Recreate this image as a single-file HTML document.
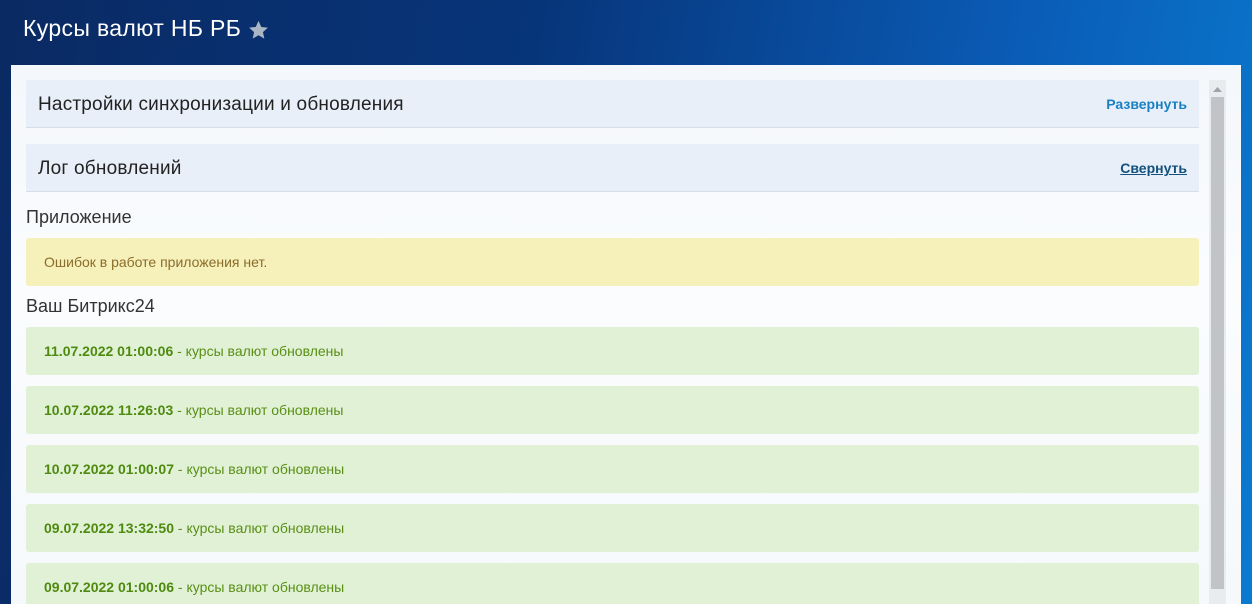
<!DOCTYPE html>
<html style="overflow:hidden"><head><meta charset="utf-8"><style>
html,body{height:604px}
body{margin:0;width:1252px;overflow:hidden;font-family:"Liberation Sans",sans-serif;
background:linear-gradient(100deg,#0a2a63 0%,#07357a 40%,#0a5bb5 75%,#0a7ad0 100%);position:relative}
.title{position:absolute;left:23px;top:15px;color:#fff;font-size:23px;letter-spacing:0.35px}
.star{position:absolute;left:248px;top:20px}
.panel{position:absolute;left:11px;top:65px;width:1230px;height:539px;overflow:hidden;background:linear-gradient(180deg,#f4f7fb,#fafcfe 40%,#f6f9fb)}
.hdr{position:absolute;left:15px;width:1173px;height:48px;background:#e8eff8;border-bottom:1px solid #d5dfeb;box-sizing:border-box}
.hdr span{position:absolute;left:12px;top:14px;font-size:19px;color:#222;letter-spacing:0.2px}
.hdr a{position:absolute;right:12px;top:16px;font-size:14px;font-weight:bold;color:#1a80c2}
.h{position:absolute;left:15px;font-size:18px;color:#333}
.box{position:absolute;left:15px;width:1173px;height:48px;border-radius:3px;font-size:14px}
.box span{position:absolute;left:18px;top:16px}
.y{background:#f6f0bb;color:#8a6d2a}
.g{background:#e0f1d6;color:#5a8f16}
.g b{color:#4e8a0e}
.sb{position:absolute;left:1198px;top:15px;width:17px;height:524px;background:#e9ecef}
.th{position:absolute;left:2px;top:17px;width:13px;height:492px;background:#c1c3c6}
</style></head><body>
<div class="title">Курсы валют НБ РБ</div>
<svg class="star" width="21" height="20" viewBox="0 0 24 23"><path d="M12 1l3.2 7 7.6.8-5.7 5.1 1.6 7.5L12 17.6 5.3 21.4l1.6-7.5L1.2 8.8 8.8 8z" fill="#a9b6c6"/></svg>
<div class="panel">
<div class="hdr" style="top:15px"><span>Настройки синхронизации и обновления</span><a>Развернуть</a></div>
<div class="hdr" style="top:79px"><span>Лог обновлений</span><a style="color:#12517e;text-decoration:underline">Свернуть</a></div>
<div class="h" style="top:142px">Приложение</div>
<div class="box y" style="top:173px"><span>Ошибок в работе приложения нет.</span></div>
<div class="h" style="top:231px">Ваш Битрикс24</div>
<div class="box g" style="top:262px"><span><b>11.07.2022 01:00:06</b> - курсы валют обновлены</span></div>
<div class="box g" style="top:321px"><span><b>10.07.2022 11:26:03</b> - курсы валют обновлены</span></div>
<div class="box g" style="top:380px"><span><b>10.07.2022 01:00:07</b> - курсы валют обновлены</span></div>
<div class="box g" style="top:439px"><span><b>09.07.2022 13:32:50</b> - курсы валют обновлены</span></div>
<div class="box g" style="top:498px"><span><b>09.07.2022 01:00:06</b> - курсы валют обновлены</span></div>
<div class="sb"><svg style="position:absolute;left:4px;top:7px" width="9" height="5"><path d="M0 5L4.5 0 9 5z" fill="#a0a4a8"/></svg><div class="th"></div></div>
</div>
</body></html>
